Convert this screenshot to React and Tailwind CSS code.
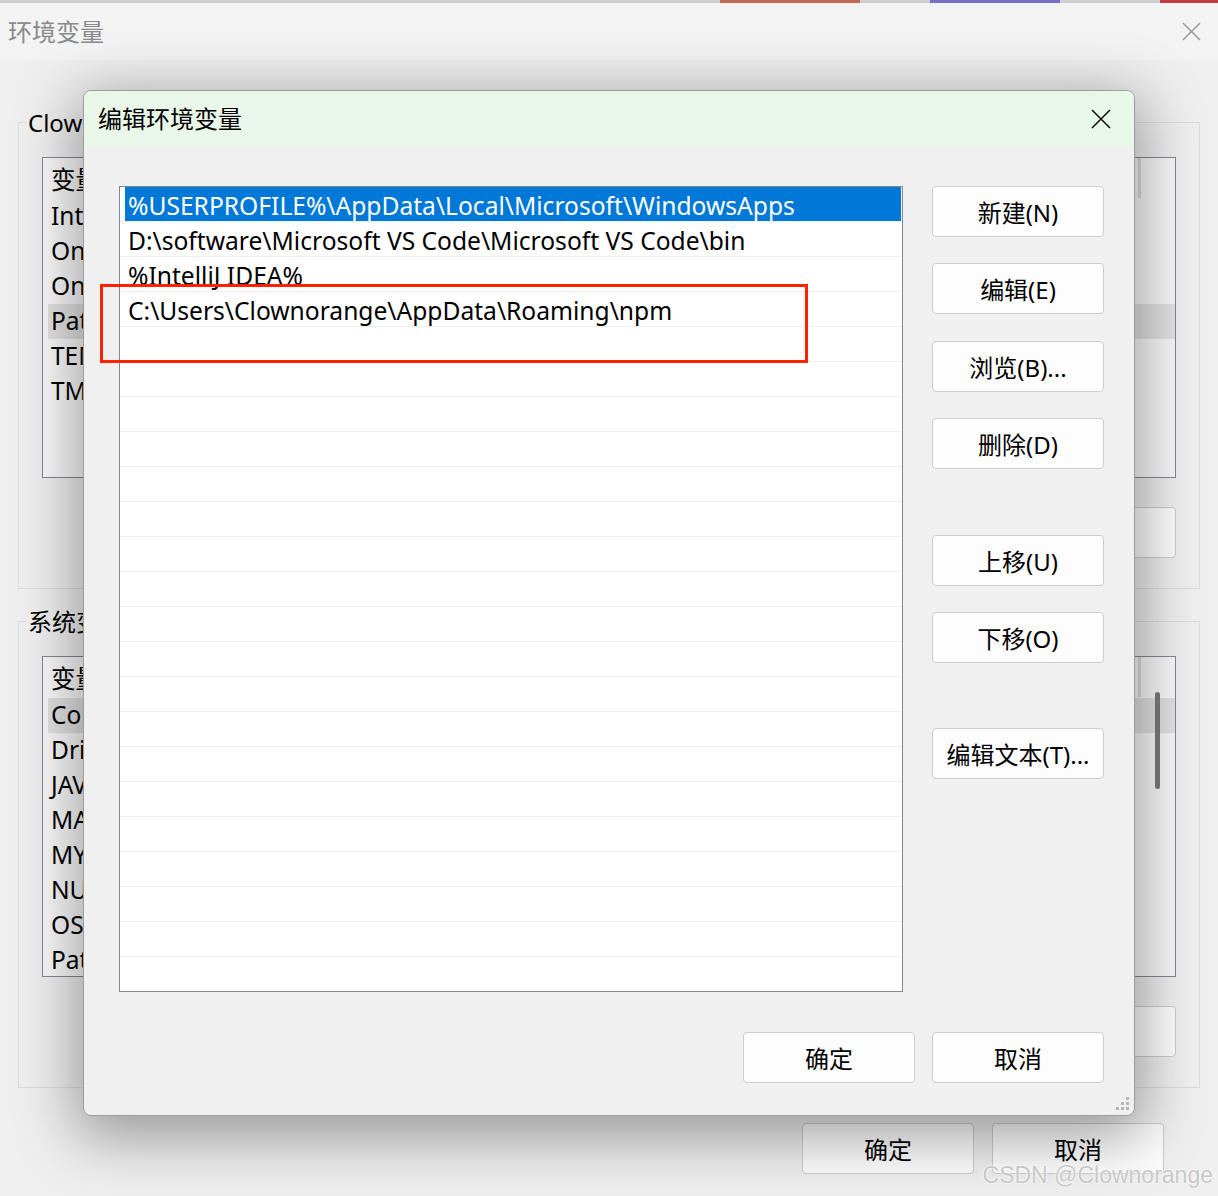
import React from "react";

const font = "font-['Noto_Sans','Noto_Sans_CJK_SC',sans-serif]";

const userVars = ["变量", "IntelliJ IDEA", "OneDrive", "OneDriveConsumer", "Path", "TEMP", "TMP"];
const sysVars = ["变量", "ComSpec", "DriverData", "JAVA_HOME", "MAVEN_HOME", "MYSQL_HOME", "NUMBER_OF_PROCESSORS", "OS", "Path"];

const paths = [
  "%USERPROFILE%\\AppData\\Local\\Microsoft\\WindowsApps",
  "D:\\software\\Microsoft VS Code\\Microsoft VS Code\\bin",
  "%IntelliJ IDEA%",
  "C:\\Users\\Clownorange\\AppData\\Roaming\\npm",
];

const CloseIcon = ({ className }) => (
  <svg viewBox="0 0 20 20" className={className} fill="none" stroke="currentColor" strokeWidth="1.6">
    <path d="M1 1 L19 19 M19 1 L1 19" />
  </svg>
);

const Btn = ({ children, className = "" }) => (
  <button
    className={`w-[172px] h-[51px] rounded-[4px] border border-[#cccccc] bg-[#fdfdfd] text-[24px] text-black flex items-center justify-center pt-[2px] ${className}`}
  >
    {children}
  </button>
);

const VarList = ({ items, hi, scroll }) => (
  <div className="relative h-[321px] border border-[#828790] bg-[#f9f9f9] pt-[5px] pl-[5px]">
    {items.map((v, i) => (
      <div
        key={i}
        className={`h-[35px] flex items-center pl-[3px] text-[24.5px] text-black whitespace-nowrap ${
          i === hi ? "bg-[#e2e2e2]" : ""
        } ${i === 0 ? "mb-[1px]" : ""}`}
      >
        {v}
      </div>
    ))}
    <div className="absolute right-[34px] top-0 w-[3px] h-[40px] bg-[#dddddd]" />
    {scroll && <div className="absolute right-[15px] top-[35px] w-[5px] h-[97px] rounded-full bg-[#7a7a7a]" />}
  </div>
);

const Group = ({ title, items, hi, scroll, className = "" }) => (
  <fieldset className={`border border-[#dcdcdc] px-[23px] pb-[30px] ${className}`}>
    <legend className="text-[24px] leading-[32px] text-black px-[2px] ml-[-16px] pt-[1px]">{title}</legend>
    <div className="mt-[18px]">
      <VarList items={items} hi={hi} scroll={scroll} />
    </div>
    <div className="flex justify-end mt-[29px]">
      <Btn>编辑(I)...</Btn>
    </div>
  </fieldset>
);

export default function App() {
  return (
    <div className={`relative w-[1218px] h-[1196px] overflow-hidden bg-[#efefef] ${font}`}>
      {/* strip of windows behind */}
      <div className="h-[3px] flex">
        <div className="w-[720px] bg-[#cfcfcf]" />
        <div className="w-[140px] bg-[#c46a55]" />
        <div className="w-[70px] bg-[#cfcfcf]" />
        <div className="w-[130px] bg-[#7a6fc8]" />
        <div className="w-[100px] bg-[#cfcfcf]" />
        <div className="flex-1 bg-[#c43b44]" />
      </div>

      {/* background window */}
      <div className="h-[57px] bg-[#f3f3f3] flex items-center justify-between pl-[8px] pr-[17px]">
        <span className="text-[24px] text-[#8a8a8a]">环境变量</span>
        <CloseIcon className="w-[19px] h-[19px] text-[#9a9a9a]" />
      </div>

      <div className="px-[18px] pt-[46px]">
        <Group title="Clownorange 的用户变量(U)" items={userVars} hi={4} />
        <Group title="系统变量(S)" items={sysVars} hi={1} scroll className="mt-[16px]" />
        <div className="flex justify-end gap-[18px] mt-[35px] pr-[36px]">
          <Btn>确定</Btn>
          <Btn>取消</Btn>
        </div>
      </div>

      {/* dialog */}
      <div className="absolute left-[83px] top-[90px] w-[1052px] h-[1026px] rounded-[8px] border border-[#9c9c9c] bg-[#f0f0f0] shadow-[0_14px_60px_8px_rgba(0,0,0,0.36)] overflow-hidden">
        <div className="h-[56px] bg-[#e9f7e9] flex items-center justify-between pl-[14px] pr-[23px]">
          <span className="text-[24px] text-black">编辑环境变量</span>
          <CloseIcon className="w-[20px] h-[20px] text-[#111]" />
        </div>

        <div className="pl-[35px] pt-[39px] flex">
          <div className="w-[784px] h-[806px] border border-[#828790] bg-white overflow-hidden">
            {Array.from({ length: 24 }).map((_, i) => (
              <div key={i} className="h-[35px] border-b border-[#eeeeee] pl-[5px] pr-[1px]">
                <div
                  className={`h-full flex items-center pl-[3px] pt-[4px] text-[24.6px] whitespace-nowrap ${
                    i === 0 ? "bg-[#0078d7] text-white" : "text-black"
                  }`}
                >
                  {paths[i] || ""}
                </div>
              </div>
            ))}
          </div>

          <div className="ml-[29px] flex flex-col">
            <Btn>新建(N)</Btn>
            <Btn className="mt-[26px]">编辑(E)</Btn>
            <Btn className="mt-[27px]">浏览(B)...</Btn>
            <Btn className="mt-[26px]">删除(D)</Btn>
            <Btn className="mt-[66px]">上移(U)</Btn>
            <Btn className="mt-[26px]">下移(O)</Btn>
            <Btn className="mt-[65px]">编辑文本(T)...</Btn>
          </div>
        </div>

        <div className="flex justify-end gap-[17px] mt-[40px] pr-[30px]">
          <Btn className="border-[#0067c0]">确定</Btn>
          <Btn>取消</Btn>
        </div>

        {/* resize grip */}
        <svg className="absolute right-[4px] bottom-[4px] w-[14px] h-[14px]" viewBox="0 0 14 14" fill="#b5b5b5">
          <rect x="10" y="0" width="3" height="3" />
          <rect x="5" y="5" width="3" height="3" />
          <rect x="10" y="5" width="3" height="3" />
          <rect x="0" y="10" width="3" height="3" />
          <rect x="5" y="10" width="3" height="3" />
          <rect x="10" y="10" width="3" height="3" />
        </svg>
      </div>

      {/* red annotation box */}
      <div className="absolute left-[100px] top-[284px] w-[708px] h-[79px] border-[3px] border-[#ff2200]" />

      {/* watermark */}
      <div className="absolute right-[5px] bottom-[4px] text-[23px] text-[#c8c8c8] font-['Liberation_Sans',sans-serif] [text-shadow:0_0_2px_#fff,0_0_2px_#fff]">
        CSDN @Clownorange
      </div>
    </div>
  );
}
